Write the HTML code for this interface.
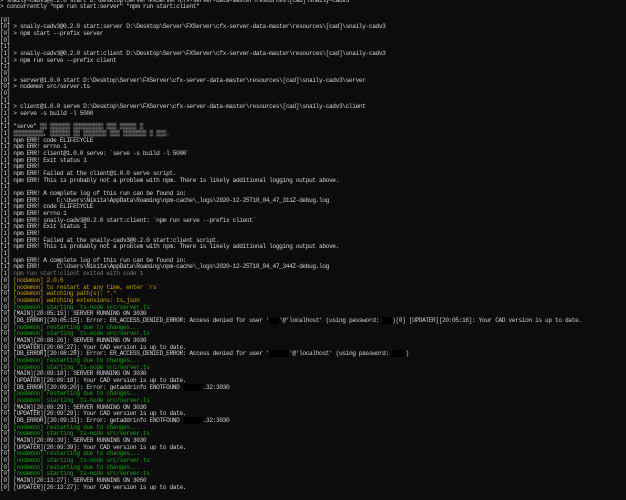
<!DOCTYPE html>
<html><head><meta charset="utf-8"><style>
html,body{margin:0;padding:0;background:#0c0c0c;width:626px;height:500px;overflow:hidden}
pre{margin:0;position:absolute;left:0;top:-2.4px;font-family:"Liberation Mono",monospace;font-size:6.2px;letter-spacing:-0.39px;line-height:6.67px;color:#d0d0d0;white-space:pre}
.y{color:#c19c00}.g{color:#13a10e}.d{color:#767676}
.r{background:#000;color:#000}
</style></head><body><pre>&gt; snaily-cadv3@0.2.0 start D:\Desktop\Server\FXServer\cfx-server-data-master\resources\[cad]\snaily-cadv3
&gt; concurrently "npm run start:server" "npm run start:client"

[0]
[0] &gt; snaily-cadv3@0.2.0 start:server D:\Desktop\Server\FXServer\cfx-server-data-master\resources\[cad]\snaily-cadv3
[0] &gt; npm start --prefix server
[0]
[1]
[1] &gt; snaily-cadv3@0.2.0 start:client D:\Desktop\Server\FXServer\cfx-server-data-master\resources\[cad]\snaily-cadv3
[1] &gt; npm run serve --prefix client
[1]
[0]
[0] &gt; server@1.0.0 start D:\Desktop\Server\FXServer\cfx-server-data-master\resources\[cad]\snaily-cadv3\server
[0] &gt; nodemon src/server.ts
[0]
[1]
[1] &gt; client@1.0.0 serve D:\Desktop\Server\FXServer\cfx-server-data-master\resources\[cad]\snaily-cadv3\client
[1] &gt; serve -s build -l 5000
[1]
[1] "serve" ▒▒ ▒▒▒▒▒▒ ▒▒▒▒▒▒▒▒▒ ▒▒▒ ▒▒▒▒▒ ▒
[1] ▒▒▒▒▒▒▒▒▒, ▒▒▒▒▒▒ ▒▒ ▒▒▒▒▒▒▒ ▒▒▒ ▒▒▒▒▒▒▒ ▒ ▒▒▒.
[1] npm ERR! code ELIFECYCLE
[1] npm ERR! errno 1
[1] npm ERR! client@1.0.0 serve: `serve -s build -l 5000`
[1] npm ERR! Exit status 1
[1] npm ERR!
[1] npm ERR! Failed at the client@1.0.0 serve script.
[1] npm ERR! This is probably not a problem with npm. There is likely additional logging output above.
[1]
[1] npm ERR! A complete log of this run can be found in:
[1] npm ERR!     C:\Users\Nikita\AppData\Roaming\npm-cache\_logs\2020-12-25T18_04_47_311Z-debug.log
[1] npm ERR! code ELIFECYCLE
[1] npm ERR! errno 1
[1] npm ERR! snaily-cadv3@0.2.0 start:client: `npm run serve --prefix client`
[1] npm ERR! Exit status 1
[1] npm ERR!
[1] npm ERR! Failed at the snaily-cadv3@0.2.0 start:client script.
[1] npm ERR! This is probably not a problem with npm. There is likely additional logging output above.
[1]
[1] npm ERR! A complete log of this run can be found in:
[1] npm ERR!     C:\Users\Nikita\AppData\Roaming\npm-cache\_logs\2020-12-25T18_04_47_344Z-debug.log
[1] <span class="d">npm run start:client exited with code 1</span>
[0] <span class="y">[nodemon] 2.0.6</span>
[0] <span class="y">[nodemon] to restart at any time, enter `rs`</span>
[0] <span class="y">[nodemon] watching path(s): *.*</span>
[0] <span class="y">[nodemon] watching extensions: ts,json</span>
[0] <span class="g">[nodemon] starting `ts-node src/server.ts`</span>
[0] [MAIN][20:05:15]: SERVER RUNNING ON 3030
[0] [DB_ERROR][20:05:15]: Error: ER_ACCESS_DENIED_ERROR: Access denied for user '<span class="r">xxx</span>'@'localhost' (using password: <span class="r">xxx</span>)[0] [UPDATER][20:05:16]: Your CAD version is up to date.
[0] <span class="g">[nodemon] restarting due to changes...</span>
[0] <span class="g">[nodemon] starting `ts-node src/server.ts`</span>
[0] [MAIN][20:08:26]: SERVER RUNNING ON 3030
[0] [UPDATER][20:08:27]: Your CAD version is up to date.
[0] [DB_ERROR][20:08:28]: Error: ER_ACCESS_DENIED_ERROR: Access denied for user '<span class="r">xxxxxx</span>'@'localhost' (using password: <span class="r">xxxx</span>)
[0] <span class="g">[nodemon] restarting due to changes...</span>
[0] <span class="g">[nodemon] starting `ts-node src/server.ts`</span>
[0] [MAIN][20:09:18]: SERVER RUNNING ON 3030
[0] [UPDATER][20:09:18]: Your CAD version is up to date.
[0] [DB_ERROR][20:09:20]: Error: getaddrinfo ENOTFOUND <span class="r">xxxxxx</span>.32:3030
[0] <span class="g">[nodemon] restarting due to changes...</span>
[0] <span class="g">[nodemon] starting `ts-node src/server.ts`</span>
[0] [MAIN][20:09:29]: SERVER RUNNING ON 3030
[0] [UPDATER][20:09:29]: Your CAD version is up to date.
[0] [DB_ERROR][20:09:31]: Error: getaddrinfo ENOTFOUND <span class="r">xxxxxx</span>.32:3030
[0] <span class="g">[nodemon] restarting due to changes...</span>
[0] <span class="g">[nodemon] starting `ts-node src/server.ts`</span>
[0] [MAIN][20:09:39]: SERVER RUNNING ON 3030
[0] [UPDATER][20:09:39]: Your CAD version is up to date.
[0] <span class="g">[nodemon] restarting due to changes...</span>
[0] <span class="g">[nodemon] starting `ts-node src/server.ts`</span>
[0] <span class="g">[nodemon] restarting due to changes...</span>
[0] <span class="g">[nodemon] starting `ts-node src/server.ts`</span>
[0] [MAIN][20:13:27]: SERVER RUNNING ON 3050
[0] [UPDATER][20:13:27]: Your CAD version is up to date.
</pre></body></html>
